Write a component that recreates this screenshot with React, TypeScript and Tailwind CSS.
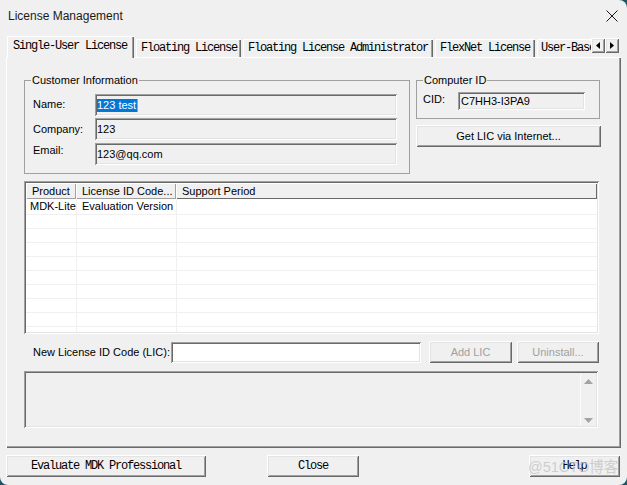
import React from "react";

const raised =
  "shadow-[inset_1px_1px_0_#fff,inset_-1px_-1px_0_#696969,inset_2px_2px_0_#e3e3e3,inset_-2px_-2px_0_#a0a0a0]";
const sunken =
  "shadow-[inset_1px_1px_0_#a0a0a0,inset_-1px_-1px_0_#fff,inset_2px_2px_0_#696969,inset_-2px_-2px_0_#e3e3e3]";
const panelShadow =
  "shadow-[inset_1px_1px_0_#fff,inset_-1px_-1px_0_#696969,inset_-2px_-2px_0_#a0a0a0]";
const mono = "font-['Liberation_Mono',monospace] text-[12px] tracking-[-1.2px]";
const tabCls =
  "h-[18px] ml-[2px] pl-[5px] flex items-center bg-[#f0f0f0] whitespace-nowrap overflow-hidden shadow-[inset_1px_1px_0_#fff,inset_-1px_0_0_#696969,inset_-2px_0_0_#a0a0a0]";

function Arrow({ dir }: { dir: "l" | "r" }) {
  return (
    <div className={`w-[14px] h-[15px] flex items-center justify-center bg-[#f0f0f0] ${raised}`}>
      <svg width="4" height="7" viewBox="0 0 4 7">
        {dir === "l" ? (
          <polygon points="4,0 0,3.5 4,7" fill="#000" />
        ) : (
          <polygon points="0,0 4,3.5 0,7" fill="#000" />
        )}
      </svg>
    </div>
  );
}

export default function App() {
  const rows = Array.from({ length: 10 });
  return (
    <div className="relative w-[627px] h-[485px] overflow-hidden bg-[#1f5568]">
      <div className="w-full h-full bg-[#f0f0f0] rounded-tr-[8px] rounded-b-[8px] flex flex-col font-['Liberation_Sans',sans-serif] text-[11px] leading-[13px] text-black">
        {/* Title bar */}
        <div className="h-[32px] shrink-0 flex items-center justify-between pl-[8px] pr-[9px]">
          <span className="text-[12px] leading-[16px] text-[#1a1a1a]">License Management</span>
          <svg width="12" height="12" viewBox="0 0 12 12">
            <path d="M0.5 0.5L11.5 11.5M11.5 0.5L0.5 11.5" stroke="#1a1a1a" strokeWidth="1" />
          </svg>
        </div>

        {/* Tabs */}
        <div className="ml-[6px] mt-[4px] w-[615px]">
          <div className="flex items-end h-[21px] pl-[1px]">
            <div
              className={`relative z-10 h-[22px] -mb-[1px] w-[127px] pl-[6px] pb-[2px] flex items-center bg-[#f0f0f0] whitespace-nowrap shadow-[inset_1px_1px_0_#fff,inset_-1px_0_0_#696969,inset_-2px_0_0_#a0a0a0] ${mono}`}
            >
              Single-User License
            </div>
            <div className={`${tabCls} w-[105px] ${mono}`}>Floating License</div>
            <div className={`${tabCls} w-[190px] ${mono}`}>Floating License Administrator</div>
            <div className={`${tabCls} w-[100px] ${mono}`}>FlexNet License</div>
            <div
              className={`h-[18px] ml-[2px] pl-[4px] w-[54px] flex items-center bg-[#f0f0f0] whitespace-nowrap overflow-hidden shadow-[inset_1px_1px_0_#fff] ${mono}`}
            >
              User-Based License
            </div>
            <div className="self-start mt-[2px] flex">
              <Arrow dir="l" />
              <Arrow dir="r" />
            </div>
          </div>

          {/* Panel */}
          <div className={`h-[391px] pl-[18px] pt-[17px] bg-[#f0f0f0] ${panelShadow}`}>
            {/* Row 1 */}
            <div className="flex items-start gap-[6px]">
              <fieldset className="w-[386px] h-[100px] border border-[#a0a0a0] pl-[8px]">
                <legend className="ml-[-2px] px-[1px] leading-[13px]">Customer Information</legend>
                <div className="mt-[7px] flex h-[22px]">
                  <span className="w-[62px] pt-[4px]">Name:</span>
                  <div className={`w-[302px] h-[22px] pl-[2px] flex items-center bg-[#f0f0f0] ${sunken}`}>
                    <span className="bg-[#0078d7] text-white leading-[13px] pr-[1px]">123 test</span>
                    <span className="w-[1px] h-[13px] bg-[#e9913e]" />
                  </div>
                </div>
                <div className="mt-[2px] flex h-[22px]">
                  <span className="w-[62px] pt-[5px]">Company:</span>
                  <div className={`w-[302px] h-[22px] pl-[2px] flex items-center bg-[#f0f0f0] ${sunken}`}>123</div>
                </div>
                <div className="mt-[3px] flex h-[22px]">
                  <span className="w-[62px] pt-[1px]">Email:</span>
                  <div className={`w-[302px] h-[22px] pl-[2px] flex items-center bg-[#f0f0f0] ${sunken}`}>
                    123@qq.com
                  </div>
                </div>
              </fieldset>

              <div className="w-[185px] flex flex-col">
                <fieldset className="w-[184px] h-[45px] border border-[#a0a0a0] pl-[6px]">
                  <legend className="ml-[0px] px-[1px] leading-[13px]">Computer ID</legend>
                  <div className="mt-[5px] flex items-center h-[18px]">
                    <span className="w-[35px] -mt-[3px]">CID:</span>
                    <div className={`w-[127px] h-[18px] pl-[3px] flex items-center bg-[#f0f0f0] ${sunken}`}>
                      C7HH3-I3PA9
                    </div>
                  </div>
                </fieldset>
                <button className={`mt-[6px] w-[185px] h-[22px] flex items-center justify-center bg-[#f0f0f0] ${raised}`}>
                  Get LIC via Internet...
                </button>
              </div>
            </div>

            {/* List */}
            <div className={`mt-[7px] w-[575px] h-[153px] p-[2px] bg-white ${sunken}`}>
              <div className="w-full h-full flex flex-col overflow-hidden">
                <div className="flex h-[16px] shrink-0 bg-[#f0f0f0]">
                  <div className="w-[50px] pl-[6px] flex items-center shadow-[inset_1px_1px_0_#fff,inset_-1px_-1px_0_#a0a0a0]">
                    Product
                  </div>
                  <div className="w-[100px] pl-[6px] flex items-center shadow-[inset_1px_1px_0_#fff,inset_-1px_-1px_0_#a0a0a0]">
                    License ID Code...
                  </div>
                  <div className="flex-1 pl-[6px] flex items-center shadow-[inset_1px_1px_0_#fff,inset_-1px_-1px_0_#696969]">
                    Support Period
                  </div>
                </div>
                {rows.map((_, i) => (
                  <div
                    key={i}
                    className={`flex shrink-0 border-b border-[#f0f0f0] ${i === 0 ? "h-[16px]" : "h-[14px]"}`}
                  >
                    <div className="w-[51px] pl-[4px] border-r border-[#f0f0f0] flex items-center">
                      {i === 0 ? "MDK-Lite" : ""}
                    </div>
                    <div className="w-[100px] pl-[5px] border-r border-[#f0f0f0] flex items-center">
                      {i === 0 ? "Evaluation Version" : ""}
                    </div>
                    <div className="flex-1" />
                  </div>
                ))}
              </div>
            </div>

            {/* New LIC row */}
            <div className="mt-[7px] flex items-center h-[22px]">
              <span className="pl-[9px] w-[147px] pt-[1px]">New License ID Code (LIC):</span>
              <div className={`w-[250px] h-[21px] bg-white ${sunken}`} />
              <button
                className={`ml-[8px] w-[83px] h-[22px] flex items-center justify-center text-[#a0a0a0] bg-[#f0f0f0] ${raised}`}
              >
                Add LIC
              </button>
              <button
                className={`ml-[5px] w-[82px] h-[22px] flex items-center justify-center text-[#a0a0a0] bg-[#f0f0f0] ${raised}`}
              >
                Uninstall...
              </button>
            </div>

            {/* Status box */}
            <div className={`mt-[8px] w-[574px] h-[57px] p-[2px] flex justify-end bg-[#f0f0f0] ${sunken}`}>
              <div className="w-[16px] h-full flex flex-col items-center justify-between pt-[6px] pb-[3px] border-l border-[#fbfbfb]">
                <svg width="9" height="5" viewBox="0 0 9 5">
                  <polygon points="0,5 4.5,0 9,5" fill="#a3a3a3" />
                </svg>
                <svg width="9" height="5" viewBox="0 0 9 5">
                  <polygon points="0,0 4.5,5 9,0" fill="#a3a3a3" />
                </svg>
              </div>
            </div>
          </div>
        </div>

        {/* Bottom buttons */}
        <div className="mt-[7px] pl-[6px] flex">
          <button className={`w-[200px] h-[22px] flex items-center justify-center bg-[#f0f0f0] ${raised} ${mono}`}>
            Evaluate MDK Professional
          </button>
          <button className={`ml-[61px] w-[92px] h-[22px] flex items-center justify-center bg-[#f0f0f0] ${raised} ${mono}`}>
            Close
          </button>
          <button className={`ml-[170px] w-[91px] h-[22px] flex items-center justify-center bg-[#f0f0f0] ${raised} ${mono}`}>
            Help
          </button>
        </div>
      </div>

      {/* watermark */}
      <div className="absolute left-[528px] top-[459px] text-[14.5px] leading-[16px] text-[#c4c4c4]/80 font-['Liberation_Sans','Noto_Sans_CJK_SC',sans-serif] pointer-events-none whitespace-nowrap">
        @51CTO博客
      </div>
    </div>
  );
}
